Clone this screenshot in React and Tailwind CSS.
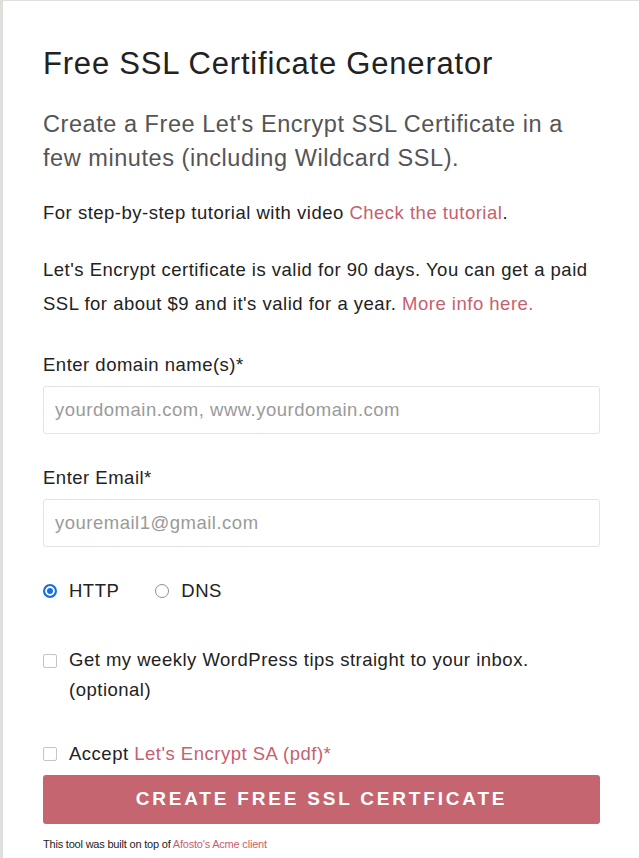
import React from 'react';

const font = { fontFamily: '"Liberation Sans", Arial, sans-serif' };

const App = () => {
  return (
    <div className="min-h-[858px] bg-[#dfdfdb] pl-[3px] pt-[1px]" style={font}>
      <div className="min-h-[857px] bg-white pl-[40px] pr-[39px] pt-[43px] text-[#222]">
        <h1 className="text-[31px] leading-[40px] tracking-[0.8px] text-[#222]">Free SSL Certificate Generator</h1>

        <p className="mt-[23px] text-[23.5px] leading-[34px] tracking-[0.55px] text-[#555]">
          Create a Free Let's Encrypt SSL Certificate in a few minutes (including Wildcard SSL).
        </p>

        <p className="mt-[21px] text-[18.5px] leading-[34px] tracking-[0.5px]">
          For step-by-step tutorial with video{' '}
          <a href="#tutorial" className="text-[#c7606e]">Check the tutorial</a>.
        </p>

        <p className="mt-[23px] text-[18.5px] leading-[34px] tracking-[0.5px]">
          Let's Encrypt certificate is valid for 90 days. You can get a paid SSL for about $9 and it's valid for a year.{' '}
          <a href="#more" className="text-[#c7606e]">More info here.</a>
        </p>

        <form className="mt-[30px] text-[18.5px] tracking-[0.5px]" onSubmit={(e) => e.preventDefault()}>
          <label className="block leading-[28px]">Enter domain name(s)*</label>
          <input
            type="text"
            placeholder="yourdomain.com, www.yourdomain.com"
            className="mt-[7px] block h-[48px] w-full rounded-[3px] border border-[#e3e3e3] px-[11px] placeholder:text-[#9a9a9a] outline-none"
          />

          <label className="mt-[30px] block leading-[28px]">Enter Email*</label>
          <input
            type="email"
            placeholder="youremail1@gmail.com"
            className="mt-[7px] block h-[48px] w-full rounded-[3px] border border-[#e3e3e3] px-[11px] placeholder:text-[#9a9a9a] outline-none"
          />

          <div className="mt-[30px] flex items-center leading-[28px]">
            <label className="flex items-center">
              <input
                type="radio"
                name="method"
                defaultChecked
                className="m-0 h-[14px] w-[14px] appearance-none rounded-full border border-[#8f8f8f] bg-white checked:border-2 checked:border-[#1a6fe0] checked:bg-[#1a6fe0] checked:shadow-[inset_0_0_0_2px_white]"
              />
              <span className="ml-[12px]">HTTP</span>
            </label>
            <label className="ml-[36px] flex items-center">
              <input
                type="radio"
                name="method"
                className="m-0 h-[14px] w-[14px] appearance-none rounded-full border border-[#8f8f8f] bg-white checked:border-2 checked:border-[#1a6fe0] checked:bg-[#1a6fe0] checked:shadow-[inset_0_0_0_2px_white]"
              />
              <span className="ml-[12px]">DNS</span>
            </label>
          </div>

          <label className="mt-[40px] flex leading-[30px]">
            <input
              type="checkbox"
              className="m-0 mt-[9px] h-[14px] w-[14px] shrink-0 appearance-none rounded-[2px] border border-[#c4c4c4] bg-white checked:bg-[#1a6fe0]"
            />
            <span className="ml-[12px]">
              Get my weekly WordPress tips straight to your inbox. (optional)
            </span>
          </label>

          <label className="mt-[35px] flex items-center leading-[28px]">
            <input
              type="checkbox"
              className="m-0 h-[14px] w-[14px] shrink-0 appearance-none rounded-[2px] border border-[#c4c4c4] bg-white checked:bg-[#1a6fe0]"
            />
            <span className="ml-[12px]">
              Accept <a href="#sa" className="text-[#c7606e]">Let's Encrypt SA (pdf)*</a>
            </span>
          </label>

          <button
            type="submit"
            className="mt-[7px] block h-[49px] w-full rounded-[3px] bg-[#c56570] text-[19px] font-bold uppercase tracking-[2.8px] text-white"
          >
            Create free SSL Certficate
          </button>
        </form>

        <p className="mt-[13px] text-[11px] leading-[14px] tracking-[-0.2px] text-[#222]">
          This tool was built on top of <a href="#acme" className="text-[#c7606e]">Afosto's Acme client</a>
        </p>
      </div>
    </div>
  );
};

export default App;
